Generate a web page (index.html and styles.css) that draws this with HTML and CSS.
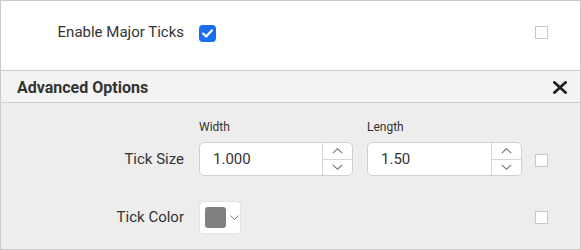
FILE: index.html
```html
<!DOCTYPE html>
<html lang="en">
<head>
  <meta charset="UTF-8" />
  <title>Tick Settings</title>
  <link rel="stylesheet" href="styles.css">
</head>
<body>
  <div class="panel">
    <div class="row top-row">
      <label class="row-label">Enable Major Ticks</label>
      <div class="control">
        <span class="check checked">
          <svg width="11" height="9" viewBox="0 0 11 9"><path d="M1.2 4.6 L4.2 7.4 L9.8 1.4" fill="none" stroke="#fff" stroke-width="2.2" stroke-linecap="round" stroke-linejoin="round"/></svg>
        </span>
      </div>
      <span class="check small"></span>
    </div>

    <div class="advanced">
      <div class="adv-header">
        <span class="adv-title">Advanced Options</span>
        <svg class="close" width="14" height="13" viewBox="0 0 14 13"><path d="M1.5 1.5 L12.5 11.5 M12.5 1.5 L1.5 11.5" stroke="#222" stroke-width="2.8" stroke-linecap="square"/></svg>
      </div>

      <div class="adv-body">
        <div class="row size-row">
          <label class="row-label input-label">Tick Size</label>
          <div class="control fields">
            <div class="field first">
              <span class="field-label">Width</span>
              <div class="spin">
                <input type="text" value="1.000" />
                <div class="spin-btns">
                  <span class="spin-btn"><svg width="11" height="6" viewBox="0 0 11 6"><path d="M0.8 5.2 L5.5 0.8 L10.2 5.2" fill="none" stroke="#6a7a8c" stroke-width="1.1"/></svg></span>
                  <span class="spin-btn"><svg width="11" height="6" viewBox="0 0 11 6"><path d="M0.8 0.8 L5.5 5.2 L10.2 0.8" fill="none" stroke="#6a7a8c" stroke-width="1.1"/></svg></span>
                </div>
              </div>
            </div>
            <div class="field">
              <span class="field-label">Length</span>
              <div class="spin">
                <input type="text" value="1.50" />
                <div class="spin-btns">
                  <span class="spin-btn"><svg width="11" height="6" viewBox="0 0 11 6"><path d="M0.8 5.2 L5.5 0.8 L10.2 5.2" fill="none" stroke="#6a7a8c" stroke-width="1.1"/></svg></span>
                  <span class="spin-btn"><svg width="11" height="6" viewBox="0 0 11 6"><path d="M0.8 0.8 L5.5 5.2 L10.2 0.8" fill="none" stroke="#6a7a8c" stroke-width="1.1"/></svg></span>
                </div>
              </div>
            </div>
          </div>
          <span class="check small size-check"></span>
        </div>

        <div class="row color-row">
          <label class="row-label">Tick Color</label>
          <div class="control">
            <div class="color-picker">
              <span class="swatch"></span>
              <svg width="9" height="5" viewBox="0 0 9 5"><path d="M0.6 0.6 L4.5 4.4 L8.4 0.6" fill="none" stroke="#6a7a8c" stroke-width="1"/></svg>
            </div>
          </div>
          <span class="check small"></span>
        </div>
      </div>
    </div>
  </div>
</body>
</html>
```

FILE: styles.css
```css
body {
  margin: 0;
  font-family: Roboto, "Liberation Sans", sans-serif;
  color: #333;
  background: #fff;
}
.panel {
  width: 581px;
  height: 250px;
  box-sizing: border-box;
  border: 1px solid #c9c9c9;
  display: flex;
  flex-direction: column;
}
.row {
  display: flex;
  align-items: center;
  padding-right: 32px;
}
.row-label {
  flex-shrink: 0;
  width: 183px;
  margin-right: 15px;
  text-align: right;
  font-size: 15px;
  line-height: 17px;
}
.control {
  flex: 1;
  display: flex;
  align-items: center;
}
.top-row {
  height: 69px;
  box-sizing: border-box;
  padding-top: 23px;
  align-items: flex-start;
  background: #fff;
}
.top-row .check.small {
  margin-top: 2px;
}
.check {
  flex-shrink: 0;
  display: inline-flex;
  align-items: center;
  justify-content: center;
  box-sizing: border-box;
}
.check.checked {
  width: 17px;
  height: 17px;
  border-radius: 4px;
  background: #1a6ef2;
  margin-top: 1px;
}
.check.small {
  width: 13px;
  height: 13px;
  border: 1px solid #c8c8c8;
  background: #fff;
  margin-left: 15px;
}
.advanced {
  flex: 1;
  display: flex;
  flex-direction: column;
  border-top: 1px solid #c9c9c9;
  background: #ededed;
}
.adv-header {
  height: 31px;
  border-bottom: 1px solid #cfcfcf;
  background: #f3f3f3;
  display: flex;
  align-items: center;
  justify-content: space-between;
  padding: 0 13px 0 16px;
}
.adv-title {
  font-size: 16px;
  font-weight: bold;
  color: #333;
  margin-top: 2px;
}
.close {
  margin-top: 1px;
}
.adv-body {
  padding-top: 17px;
}
.size-row {
  align-items: flex-end;
}
.input-label {
  line-height: 34px;
}
.fields {
  flex: none;
  gap: 14px;
  align-items: flex-start;
}
.field {
  width: 155px;
  display: flex;
  flex-direction: column;
}
.field.first {
  width: 154px;
}
.field-label {
  font-size: 12px;
  line-height: 15px;
  margin-bottom: 7px;
}
.spin {
  display: flex;
  height: 34px;
  box-sizing: border-box;
  border: 1px solid #cfcfcf;
  border-radius: 5px;
  background: #fff;
  overflow: hidden;
}
.spin input {
  flex: 1;
  min-width: 0;
  border: none;
  outline: none;
  padding: 0 0 0 13px;
  font-family: Roboto, "Liberation Sans", sans-serif;
  font-size: 15px;
  color: #333;
  background: transparent;
}
.spin-btns {
  width: 29px;
  border-left: 1px solid #d6d6d6;
  display: flex;
  flex-direction: column;
}
.spin-btn {
  flex: 1;
  display: flex;
  align-items: center;
  justify-content: center;
}
.spin-btn + .spin-btn {
  border-top: 1px solid #d6d6d6;
}
.check.size-check {
  margin-bottom: 9px;
  margin-left: 13px;
}
.color-row {
  margin-top: 25px;
}
.color-picker {
  width: 42px;
  height: 33px;
  box-sizing: border-box;
  border: 1px solid #e2e2e2;
  border-radius: 4px;
  background: #fff;
  display: flex;
  align-items: center;
  padding-left: 5px;
  gap: 4px;
}
.swatch {
  width: 21px;
  height: 21px;
  border-radius: 3px;
  background: #808080;
}
```
